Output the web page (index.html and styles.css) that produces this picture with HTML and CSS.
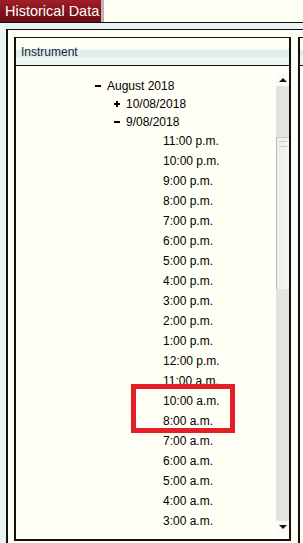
FILE: index.html
```html
<!DOCTYPE html>
<html lang="en">
<head>
<meta charset="UTF-8">
<title>Historical Data</title>
<link rel="stylesheet" href="styles.css">
</head>
<body>
<div class="tabbar">
  <div class="tab">Historical Data</div>
</div>

<div class="outer">
  <div class="panel instrument">
    <div class="panel-head">Instrument</div>
    <div class="panel-body">
      <ul class="tree">
        <li class="node lvl1"><span class="tog minus"></span>August 2018</li>
        <li class="node lvl2"><span class="tog plus"></span>10/08/2018</li>
        <li class="node lvl2"><span class="tog minus"></span>9/08/2018</li>
        <li class="leaf">11:00 p.m.</li>
        <li class="leaf">10:00 p.m.</li>
        <li class="leaf">9:00 p.m.</li>
        <li class="leaf">8:00 p.m.</li>
        <li class="leaf">7:00 p.m.</li>
        <li class="leaf">6:00 p.m.</li>
        <li class="leaf">5:00 p.m.</li>
        <li class="leaf">4:00 p.m.</li>
        <li class="leaf">3:00 p.m.</li>
        <li class="leaf">2:00 p.m.</li>
        <li class="leaf">1:00 p.m.</li>
        <li class="leaf">12:00 p.m.</li>
        <li class="leaf">11:00 a.m.</li>
        <li class="leaf">10:00 a.m.</li>
        <li class="leaf">8:00 a.m.</li>
        <li class="leaf">7:00 a.m.</li>
        <li class="leaf">6:00 a.m.</li>
        <li class="leaf">5:00 a.m.</li>
        <li class="leaf">4:00 a.m.</li>
        <li class="leaf">3:00 a.m.</li>
      </ul>
      <div class="scrollbar">
        <div class="sb-btn"><span class="arrow up"></span></div>
        <div class="sb-track">
          <div class="sb-thumb"></div>
        </div>
        <div class="sb-btn"><span class="arrow down"></span></div>
      </div>
    </div>
  </div>
  <div class="panel side">
    <div class="panel-head"></div>
  </div>
</div>

<div class="highlight"></div>
</body>
</html>
```

FILE: styles.css
```css
body {
  margin: 0;
  background: #e9f4f3;
  font-family: "Liberation Sans", Arial, sans-serif;
  overflow: hidden;
  height: 543px;
}
.tabbar {
  height: 22px;
  background: #fffff6;
  border-bottom: 1px solid #111;
}
.tab {
  width: 104px;
  height: 22px;
  padding-left: 5px;
  box-sizing: border-box;
  background: linear-gradient(#a11f27, #7d1217 60%, #6a0c11);
  border-right: 3px solid #b9b6b4;
  color: #fff;
  font-size: 14.5px;
  line-height: 22px;
}
.outer {
  margin: 6px 0 0 6px;
  border-top: 1px solid #111;
  border-left: 2px solid #111;
  background: #fffff6;
  padding: 7px 0 0 6px;
  display: flex;
  gap: 7px;
  height: 506px;
}
.panel {
  border: 2px solid #111;
  border-top-width: 1px;
  flex: none;
}
.instrument {
  width: 273px;
  height: 501px;
}
.side {
  flex: 1;
  min-width: 0;
  border-right: none;
  border-bottom: none;
}
.panel-head {
  height: 27px;
  border-bottom: 1px solid #111;
  background: linear-gradient(#fffff6 0, #fffff6 11px, #e1eeee 12px, #e1eeee 19px, #eef6f3 20px);
  font-size: 12px;
  line-height: 28px;
  padding-left: 5px;
  color: #1c1c3a;
}
.panel-body {
  display: flex;
  height: 473px;
  overflow: hidden;
}
.tree {
  flex: 1;
  list-style: none;
  margin: 0;
  padding: 11px 0 0 0;
  font-size: 12px;
  color: #000;
}
.tree li {
  display: flex;
  align-items: center;
  white-space: nowrap;
}
.node {
  height: 18px;
}
.leaf {
  height: 20px;
  padding-left: 147px;
}
.lvl1 {
  padding-left: 79px;
}
.lvl2 {
  padding-left: 98px;
}
.tog {
  width: 12px;
  height: 12px;
  position: relative;
  flex: none;
}
.tog::before {
  content: "";
  position: absolute;
  left: 0;
  top: 5px;
  width: 6px;
  height: 2px;
  background: #000;
}
.plus::after {
  content: "";
  position: absolute;
  left: 2px;
  top: 3px;
  width: 2px;
  height: 6px;
  background: #000;
}
.scrollbar {
  width: 13px;
  margin-top: 8px;
  height: 459px;
  display: flex;
  flex-direction: column;
  flex: none;
}
.sb-btn {
  height: 12px;
  background: #fbfcf7;
  display: flex;
  align-items: center;
  justify-content: center;
}
.arrow {
  width: 0;
  height: 0;
  border-left: 4px solid transparent;
  border-right: 4px solid transparent;
}
.arrow.up {
  border-bottom: 4px solid #111;
}
.arrow.down {
  border-top: 4px solid #111;
}
.sb-track {
  flex: 1;
  background: #e2e5de;
  padding-top: 51px;
}
.sb-thumb {
  height: 152px;
  background: linear-gradient(90deg, #eef0ea, #f5f6f1);
  border-left: 1px solid #b9bdb5;
  border-top: 1px solid #c8ccc4;
  box-sizing: border-box;
  position: relative;
}
.sb-thumb::before {
  content: "";
  position: absolute;
  left: 2px;
  right: 2px;
  top: 3px;
  height: 4px;
  border-top: 1px solid #c8ccc4;
  border-bottom: 1px solid #c8ccc4;
}
.highlight {
  position: absolute;
  left: 131px;
  top: 384px;
  width: 104px;
  height: 49px;
  box-sizing: border-box;
  border: 5px solid #e51f27;
}
```
